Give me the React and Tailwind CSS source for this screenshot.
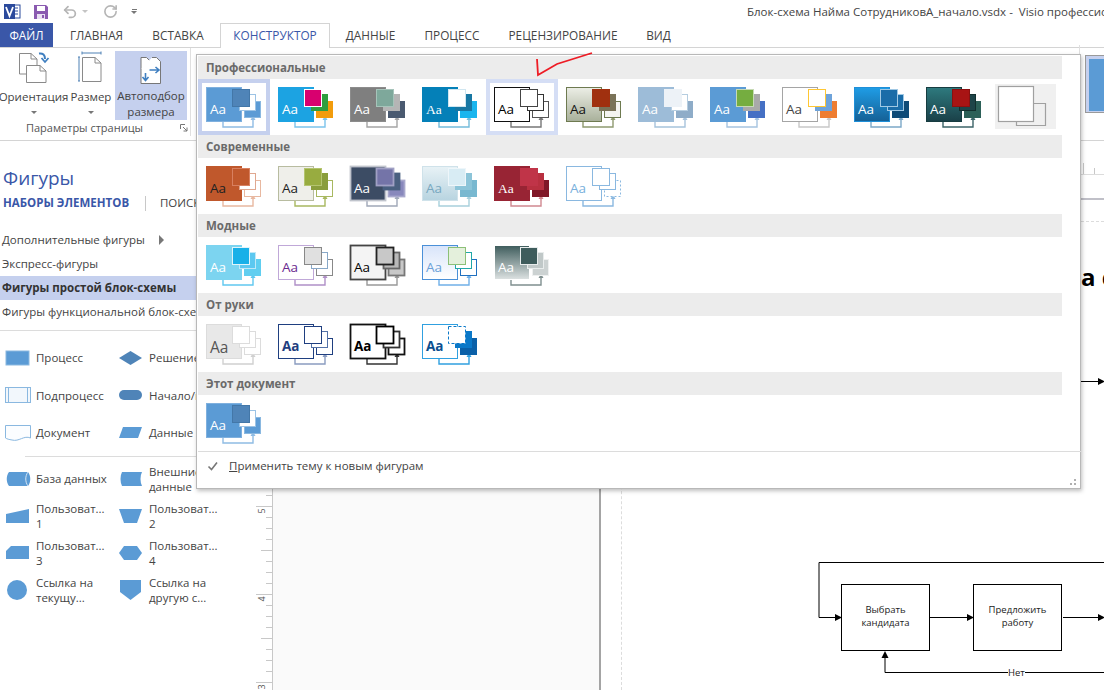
import { RotateCcw, Undo2 } from "lucide-react";

const tabs = [
  { label: "ГЛАВНАЯ", w: "w-[83px]" },
  { label: "ВСТАВКА", w: "w-[80px]" },
  { label: "ДАННЫЕ", w: "w-[81px]" },
  { label: "ПРОЦЕСС", w: "w-[82px]" },
  { label: "РЕЦЕНЗИРОВАНИЕ", w: "w-[140px]" },
  { label: "ВИД", w: "w-[51px]" },
];

// big, back, mid, front: [fill, stroke]; line: connector colour; aa: text colour
const professional = [
  { id: "p1", big: ["#5b9bd5", "#7fb0de"], front: ["#4f84b8", "#4377a8"], mid: ["#fff", "#9cc3e5"], back: ["#5b9bd5", "#8ab8e0"], line: "#8fbce4", aa: "#fff", sel: "#c5d0ee" },
  { id: "p2", big: ["#1ca3e2", "#1ca3e2"], front: ["#d8006f", "#fff"], mid: ["#2e9e3f", "#2e9e3f"], back: ["#f29c0c", "#f29c0c"], line: "#7cc4ec", aa: "#fff" },
  { id: "p3", big: ["#7f7f7f", "#8c8c8c"], front: ["#7ea89b", "#a6c4ba"], mid: ["#b5b5b5", "#b5b5b5"], back: ["#4a5a70", "#4a5a70"], line: "#a5a5a5", aa: "#fff" },
  { id: "p4", big: ["#0480b8", "#0480b8"], front: ["#fff", "#d0e6f0"], mid: ["#1877a3", "#1877a3"], back: ["#19b5ee", "#19b5ee"], line: "#74bcdb", aa: "#fff", serif: true },
  { id: "p5", big: ["#fff", "#111"], front: ["#fff", "#444"], mid: ["#fff", "#333"], back: ["#fff", "#555"], line: "#777", aa: "#000", sel: "#d5def5" },
  { id: "p6", big: ["url(#p6g)", "#6e7a50"], grad: ["#eceee6", "#a8b09a"], front: ["#a0300f", "#a0300f"], mid: ["#7a7358", "#7a7358"], back: ["#f4f4f0", "#6e7a50"], line: "#8f9a70", aa: "#111" },
  { id: "p7", big: ["#9dbcd8", "#9dbcd8"], front: ["#edf2f7", "#edf2f7"], mid: ["#fff", "#b5cde0"], back: ["#8eacc8", "#8eacc8"], line: "#a7c3dc", aa: "#fff" },
  { id: "p8", big: ["#5b9bd5", "#5b9bd5"], front: ["#75ad40", "#c6dab4"], mid: ["#a9a9a9", "#a9a9a9"], back: ["#4570c4", "#4570c4"], line: "#a6c4e0", aa: "#fff" },
  { id: "p9", big: ["#fff", "#a5a5a5"], front: ["#fff", "#ffc733"], mid: ["#6ea3da", "#6ea3da"], back: ["#ee7d31", "#ee7d31"], line: "#c8c8c8", aa: "#444" },
  { id: "p10", big: ["url(#p10g)", "#1f8fd8"], grad: ["#1f9de6", "#156095"], front: ["#1a6ca8", "#a0c8e4"], mid: ["#1a6ca8", "#a0c8e4"], back: ["#0e4b78", "#0e4b78"], line: "#7ca8c8", aa: "#fff" },
  { id: "p11", big: ["url(#p11g)", "#173c40"], grad: ["#2e7a7e", "#1a4048"], front: ["#a81414", "#8a1010"], mid: ["#1e4448", "#12302f"], back: ["#2c6058", "#2c6058"], line: "#3c6468", aa: "#fff" },
  { id: "p12", big: ["#fff", "#a0a0a0"], plain: true, line: "#a0a0a0" },
];

const modern = [
  { id: "m1", big: ["#c0582c", "#c0582c"], front: ["#c0582c", "#d88060"], mid: ["#fff", "#e0a890"], back: ["#fff", "#e8b8a0"], line: "#e8b8a0", aa: "#222" },
  { id: "m2", big: ["#efefea", "#b8bca0"], front: ["#98ac40", "#b4c470"], mid: ["#8a9e3c", "#8a9e3c"], back: ["#fff", "#a8b860"], line: "#a8b860", aa: "#222" },
  { id: "m3", big: ["#3c4c64", "#c0c4cc"], front: ["#7474a8", "#a0a0c4"], mid: ["#4a6080", "#4a6080"], back: ["#8888bc", "#a8a8cc"], line: "#a0a8b8", aa: "#fff", heavy: true },
  { id: "m4", big: ["url(#m4g)", "#cfe2ea"], grad: ["#e8f2f6", "#b8d4e0"], front: ["#d8ecf4", "#eef6fa"], mid: ["#8cc4d8", "#8cc4d8"], back: ["#78b8d0", "#78b8d0"], line: "#a8d0dc", aa: "#78a8c0" },
  { id: "m5", big: ["#982434", "#982434"], front: ["#c03448", "#c03448"], mid: ["#b83040", "#b83040"], back: ["#801828", "#801828"], line: "#d08890", aa: "#fff", serif: true },
  { id: "m6", big: ["#fff", "#8ab8e0"], front: ["#fff", "#8ab8e0"], mid: ["#fff", "#8ab8e0"], back: ["#fff", "#8ab8e0"], dashBack: true, line: "#8ab8e0", aa: "#78b0dc" },
];

const trendy = [
  { id: "t1", big: ["#7cd4f0", "#7cd4f0"], front: ["#18b0e8", "#dff4fb"], mid: ["#5cc8f0", "#bfe8f8"], back: ["#60cef0", "#60cef0"], line: "#60c8f0", aa: "#fff" },
  { id: "t2", big: ["#fff", "#c0a8d8"], front: ["#e0e0e0", "#888"], mid: ["#fff", "#88a8c8"], back: ["#fff", "#888"], line: "#b090c8", aa: "#6a2a90" },
  { id: "t3", big: ["#f4f4f4", "#444"], front: ["#c8c8c8", "#222"], mid: ["#b8b8b8", "#666"], back: ["#c8c8c8", "#777"], line: "#999", aa: "#000", heavy: true },
  { id: "t4", big: ["url(#t4g)", "#4a90d8"], grad: ["#d8e4fa", "#fff"], front: ["#e4f0dc", "#8cc078"], mid: ["#fff", "#20a8a8"], back: ["#fff", "#2070c0"], line: "#70b0e8", aa: "#6aa0d8" },
  { id: "t5", big: ["url(#t5g)", "#fff"], grad: ["#3e5c5c", "#dde2e2"], front: ["#3e5c5c", "#e8ecec"], mid: ["#c0c8c8", "#e8ecec"], back: ["#ccd2d2", "#eef0f0"], line: "#7f8f8f", aa: "#fff" },
];

const sketch = [
  { id: "s1", big: ["#e8e8e8", "#dcdcdc"], front: ["#fff", "#dcdcdc"], mid: ["#fff", "#dcdcdc"], back: ["#fff", "#dcdcdc"], line: "#d0d0d0", aa: "#555", large: true },
  { id: "s2", big: ["#fff", "#1f3f80"], front: ["#fff", "#1f3f80"], mid: ["#fff", "#5472a8"], back: ["#fff", "#1f3f80"], line: "#8a9cc0", aa: "#1f3f80", bold: true },
  { id: "s3", big: ["#fff", "#111"], front: ["#fff", "#000"], mid: ["#fff", "#333"], back: ["#fff", "#111"], line: "#333", aa: "#000", bold: true, heavy: true },
  { id: "s4", big: ["#fff", "#30a0e0"], front: ["#fff", "#0a78c8"], mid: ["#0a78c8", "#0a78c8"], back: ["#0a60a8", "#0a60a8"], dashFront: true, line: "#30a0e0", aa: "#0a5090", bold: true },
];

const shapesTop = [
  [{ name: "Процесс", kind: "process" }, { name: "Решение", kind: "decision" }],
  [{ name: "Подпроцесс", kind: "subprocess" }, { name: "Начало/конец", kind: "terminator", nowrap: true }],
  [{ name: "Документ", kind: "document" }, { name: "Данные", kind: "data" }],
];

const shapesBottom = [
  [{ name: "База данных", kind: "database" }, { name: "Внешние данные", kind: "external" }],
  [{ name: "Пользоват... 1", kind: "manual" }, { name: "Пользоват... 2", kind: "trapezoid" }],
  [{ name: "Пользоват... 3", kind: "cut" }, { name: "Пользоват... 4", kind: "hexagon" }],
  [{ name: "Ссылка на текущу...", kind: "circle" }, { name: "Ссылка на другую с...", kind: "offpage" }],
];

function ShapeIcon({ kind }) {
  const fill = "#5b9bd5";
  const dark = "#4f84b8";
  return (
    <svg width="28" height="22" viewBox="0 0 28 22" className="shrink-0">
      {kind === "process" && <rect x="2" y="4" width="23" height="14" fill={fill} stroke="#8ab8e0" />}
      {kind === "decision" && <polygon points="2,11 13.5,4 25,11 13.5,18" fill={dark} />}
      {kind === "subprocess" && (
        <g fill="#f2f7fc" stroke="#8ab8e0">
          <rect x="1.5" y="3.5" width="25" height="15" />
          <line x1="4.5" y1="3.5" x2="4.5" y2="18.5" />
          <line x1="23.5" y1="3.5" x2="23.5" y2="18.5" />
        </g>
      )}
      {kind === "terminator" && <rect x="2" y="6" width="23" height="10" rx="5" fill={dark} />}
      {kind === "document" && <path d="M1.5 3.5H26.5V16C20 13 15 20 8 18C5 17.5 3 17 1.5 16Z" fill="#fbfdff" stroke="#8ab8e0" />}
      {kind === "data" && <polygon points="6,5 25,5 21,16 2,16" fill={fill} />}
      {kind === "database" && (
        <g>
          <path d="M5 4H24C27 8 27 14 24 18H5C2 14 2 8 5 4Z" fill={fill} />
          <path d="M24 4C21 8 21 14 24 18" fill="none" stroke="#d6e6f5" />
        </g>
      )}
      {kind === "external" && <path d="M5 4H25C23 8 23 14 25 18H5C3 14 3 8 5 4Z" fill={fill} />}
      {kind === "manual" && <polygon points="2,9 25,4 25,18 2,18" fill={fill} />}
      {kind === "trapezoid" && <polygon points="2,4 25,4 20,18 7,18" fill={fill} />}
      {kind === "cut" && <polygon points="7,4 25,4 25,17 2,17 2,9" fill={fill} />}
      {kind === "hexagon" && <polygon points="2,11 7,4 20,4 25,11 20,18 7,18" fill={fill} />}
      {kind === "circle" && <circle cx="13" cy="11" r="10" fill={fill} />}
      {kind === "offpage" && <polygon points="3,1 24,1 24,13 13.5,21 3,13" fill={fill} />}
    </svg>
  );
}

function ThemeThumb({ t }) {
  const sw = t.heavy ? 1.8 : 1;
  const font = t.serif ? "Liberation Serif, serif" : "Open Sans, sans-serif";
  return (
    <svg width="72" height="56" viewBox="0 0 72 56" className="shrink-0">
      {t.grad && (
        <defs>
          <linearGradient id={`${t.id}g`} x1="0" y1="0" x2="0" y2="1">
            <stop offset="0" stopColor={t.grad[0]} />
            <stop offset="1" stopColor={t.grad[1]} />
          </linearGradient>
        </defs>
      )}
      {t.sel && <rect x="2" y="2" width="68" height="52" fill="#fff" stroke={t.sel} strokeWidth="4" />}
      {t.plain ? (
        <g>
          <rect x="5" y="5" width="61" height="45" fill="#f0f0f0" />
          <polyline points="44,24.5 55.5,24.5 55.5,46.5 26.5,46.5 26.5,43" fill="none" stroke={t.line} strokeWidth="1.2" />
          <rect x="8.5" y="7.5" width="35" height="35" fill="#fff" stroke={t.big[1]} strokeWidth="1.2" />
        </g>
      ) : (
        <g>
          <polyline points="25,42 25,48 55,48 55,40" fill="none" stroke={t.line} strokeWidth="1.4" />
          <polygon points="52.5,41 57.5,41 55,36.5" fill={t.line} />
          <rect x="8.5" y="8.5" width="35" height="34" fill={t.big[0]} stroke={t.big[1]} strokeWidth={sw} />
          <rect x="46.5" y="22.5" width="16" height="16" fill={t.back[0]} stroke={t.back[1]} strokeWidth={sw} strokeDasharray={t.dashBack ? "2 2" : undefined} />
          <rect x="41.5" y="15.5" width="16" height="16" fill={t.mid[0]} stroke={t.mid[1]} strokeWidth={sw} />
          <rect x="34.5" y="10.5" width="17" height="17" fill={t.front[0]} stroke={t.front[1]} strokeWidth={sw} strokeDasharray={t.dashFront ? "3 2" : undefined} />
          <text x="12" y={t.large ? 37 : 35} fontSize={t.large ? 15.5 : 13.5} fontWeight={t.bold ? 700 : 400} fontFamily={font} fill={t.aa}>
            Aa
          </text>
        </g>
      )}
    </svg>
  );
}

function GallerySection({ title, items }) {
  return (
    <div>
      <div className="w-[864px] h-[23px] bg-[#ececec] pl-[8px] flex items-center text-[11.5px] font-bold text-[#6a6a6a]">{title}</div>
      <div className="flex h-[56px]">
        {items.map((t) => (
          <ThemeThumb key={t.id} t={t} />
        ))}
      </div>
    </div>
  );
}

function ThemeDropdown() {
  return (
    <div className="absolute left-[196px] top-[54px] w-[885px] h-[435px] bg-white border border-[#b8b8b8] p-px shadow-[1px_2px_4px_rgba(0,0,0,0.25)]">
      <GallerySection title="Профессиональные" items={professional} />
      <GallerySection title="Современные" items={modern} />
      <GallerySection title="Модные" items={trendy} />
      <GallerySection title="От руки" items={sketch} />
      <GallerySection title="Этот документ" items={[{ ...professional[0], id: "d1", sel: undefined }]} />
      <div className="border-t border-[#dcdcdc] h-[28px] flex items-center w-[883px]">
        <svg width="12" height="12" viewBox="0 0 12 12" className="ml-[9px] mr-[10px]">
          <path d="M1.5 6.5L4.5 9.5L10 2.5" fill="none" stroke="#777" strokeWidth="1.6" />
        </svg>
        <span className="text-[11.5px] text-[#444]">
          <span className="underline">П</span>рименить тему к новым фигурам
        </span>
      </div>
      <div className="absolute right-[4px] bottom-[3px] grid grid-cols-2 gap-[2px]">
        <span className="w-[2px] h-[2px]" />
        <span className="w-[2px] h-[2px] bg-[#b0b0b0]" />
        <span className="w-[2px] h-[2px] bg-[#b0b0b0]" />
        <span className="w-[2px] h-[2px] bg-[#b0b0b0]" />
      </div>
    </div>
  );
}

function TitleBar() {
  return (
    <div className="h-[23px] flex items-center relative shrink-0">
      <svg width="18" height="18" viewBox="0 0 18 18" className="ml-[3px]">
        <rect x="9" y="2" width="8" height="13" fill="#fff" stroke="#2b4a9c" />
        <path d="M11 5H15M11 8H15M11 11H15" stroke="#2b4a9c" />
        <rect x="1" y="1" width="11" height="15" fill="#2b4a9c" />
        <path d="M3 4L6.5 13L10 4" fill="none" stroke="#fff" strokeWidth="1.8" />
      </svg>
      <svg width="16" height="16" viewBox="0 0 16 16" className="ml-[12px]">
        <path d="M1 1H13L15 3V15H1Z" fill="#8a5ab0" />
        <rect x="4" y="2" width="8" height="5" fill="#fff" />
        <rect x="4" y="10" width="8" height="5" fill="#e9dff2" />
        <rect x="9" y="11" width="2" height="3" fill="#8a5ab0" />
      </svg>
      <Undo2 size={16} strokeWidth={2.6} className="text-[#b5b5b5] ml-[13px]" />
      <span className="w-0 h-0 ml-[4px] border-x-[3px] border-x-transparent border-t-[3px] border-t-[#c4c4c4]" />
      <RotateCcw size={15} strokeWidth={2.6} className="text-[#b5b5b5] ml-[15px] -scale-x-100" />
      <span className="ml-[13px] flex flex-col items-center gap-[1px]">
        <span className="w-[5px] h-px bg-[#777]" />
        <span className="w-0 h-0 border-x-[3px] border-x-transparent border-t-[3px] border-t-[#777]" />
      </span>
      <span className="absolute left-[747px] top-[3px] text-[11.5px] text-[#444] whitespace-pre">
        Блок-схема Найма СотрудниковА_начало.vsdx -  Visio профессиональный
      </span>
    </div>
  );
}

function Tab({ tab }) {
  return <div className={`${tab.w} text-center text-[11.8px] text-[#444] leading-[24px]`}>{tab.label}</div>;
}

function TabRow() {
  return (
    <div className="h-[25px] flex border-b border-[#d4d4d4] shrink-0">
      <div className="w-[53px] h-[24px] bg-[#3a57a8] text-white text-[11.8px] leading-[24px] text-center">ФАЙЛ</div>
      <div className="w-[2px]" />
      <Tab tab={tabs[0]} />
      <Tab tab={tabs[1]} />
      <div className="w-[2px]" />
      <div className="w-[110px] h-[25px] bg-white border border-b-0 border-[#d4d4d4] text-center text-[11.8px] text-[#3a57a8] leading-[23px]">
        КОНСТРУКТОР
      </div>
      <Tab tab={tabs[2]} />
      <Tab tab={tabs[3]} />
      <Tab tab={tabs[4]} />
      <Tab tab={tabs[5]} />
    </div>
  );
}

function Caret() {
  return <span className="w-0 h-0 border-x-[3px] border-x-transparent border-t-[3px] border-t-[#777] mt-[6px]" />;
}

function Ribbon() {
  return (
    <div className="h-[93px] flex border-b border-[#d4d4d4] shrink-0 relative">
      <div className="w-[191px] border-r border-[#e0e0e0] flex flex-col shrink-0 h-[88px]">
        <div className="flex pt-[3px] h-[76px]">
          <div className="w-[67px] flex flex-col items-center text-[11.5px] text-[#444]">
            <svg width="34" height="32" viewBox="0 0 34 32" className="ml-[3px]">
              <path d="M1.5 2.5H13L19 8V23H1.5Z" fill="#fff" stroke="#8a8a8a" />
              <path d="M13 2.5V8H19" fill="none" stroke="#8a8a8a" />
              <path d="M8.5 14.5H22L28 20V31.5H8.5Z" fill="#fff" stroke="#8a8a8a" />
              <path d="M22 14.5V20H28" fill="none" stroke="#8a8a8a" />
              <path d="M21 2.5C25 2 27 4 27 8" fill="none" stroke="#3f7fc0" strokeWidth="2" />
              <path d="M23.5 7L27 11L30.5 7" fill="none" stroke="#3f7fc0" strokeWidth="1.8" />
            </svg>
            <span className="leading-[16px] mt-[6px]">Ориентация</span>
            <Caret />
          </div>
          <div className="w-[48px] flex flex-col items-center text-[11.5px] text-[#444]">
            <svg width="26" height="32" viewBox="0 0 26 32">
              <path d="M4 2H23M4 0.5V3.5M23 0.5V3.5" stroke="#4f81b5" fill="none" />
              <path d="M1 6V30M0 6H2M0 30H2" stroke="#4f81b5" fill="none" />
              <path d="M4.5 6.5H17L23 12V30.5H4.5Z" fill="#fff" stroke="#8a8a8a" />
              <path d="M17 6.5V12H23" fill="none" stroke="#8a8a8a" />
            </svg>
            <span className="leading-[16px] mt-[6px]">Размер</span>
            <Caret />
          </div>
          <div className="w-[72px] h-[69px] bg-[#c5d0ee] flex flex-col items-center text-[11.5px] text-[#444] leading-[16px]">
            <svg width="22" height="27" viewBox="3 3 21 27" className="mt-[6px]">
              <path d="M3.5 3.5H9L12 6.5V15H3.5Z" fill="#fff" stroke="#777" />
              <path d="M14.5 3.5H19L23 7.5V29.5H3.5V15" fill="#fff" stroke="#777" />
              <path d="M12 16H21M18 13L21.5 16L18 19" fill="none" stroke="#3f7fc0" strokeWidth="1.6" />
              <path d="M8 19V26M5 23L8 26.5L11 23" fill="none" stroke="#3f7fc0" strokeWidth="1.6" />
            </svg>
            <span className="mt-[4px] whitespace-nowrap">Автоподбор</span>
            <span>размера</span>
          </div>
        </div>
        <div className="flex items-center relative">
          <span className="w-[169px] text-center text-[11px] text-[#555]">Параметры страницы</span>
          <svg width="8" height="8" viewBox="0 0 8 8" className="absolute left-[180px]">
            <path d="M0.5 0.5H5M0.5 0.5V5M3 3L7 7M7 3.5V7H3.5" fill="none" stroke="#777" />
          </svg>
        </div>
      </div>
      <div className="ml-auto mr-0 w-[19px] border-l border-[#e0e0e0] h-[88px] mt-[-3px] pl-[5px] pt-[10px] box-content">
        <div className="w-[20px] h-[58px] bg-[#c5d0ee] border border-[#9a9a9a] pl-[3px] pt-[3px]">
          <div className="w-[20px] h-[52px] bg-[#5b9bd5]" />
        </div>
      </div>
    </div>
  );
}

function ShapeRow({ row, h }) {
  return (
    <div className={`flex ${h} items-center`}>
      {row.map((s) => (
        <div key={s.name} className="w-[113px] flex items-center shrink-0">
          <span className="ml-[4px] mr-[4px] flex"><ShapeIcon kind={s.kind} /></span>
          <span className={`w-[72px] text-[11.5px] leading-[15.5px] text-[#444] ${s.nowrap ? "whitespace-nowrap" : ""}`}>{s.name}</span>
        </div>
      ))}
    </div>
  );
}

function ShapesPanel() {
  return (
    <div className="w-[256px] shrink-0 overflow-hidden">
      <div className="pt-[23px] pl-[3px] h-[51px] text-[19px] leading-[28px] text-[#3a57a8]">Фигуры</div>
      <div className="flex items-center h-[22px] pl-[3px] text-[11.5px]">
        <span className="w-[128px] font-bold text-[#3a57a8] whitespace-nowrap">НАБОРЫ ЭЛЕМЕНТОВ</span>
        <span className="w-px h-[15px] bg-[#c8c8c8] mx-[14px]" />
        <span className="text-[#444]">ПОИСК</span>
      </div>
      <div className="mt-[14px] text-[11.5px] text-[#444]">
        <div className="h-[24px] flex items-center pl-[2px] w-[196px] whitespace-nowrap">
          Дополнительные фигуры
          <span className="ml-[14px] w-0 h-0 border-y-[5px] border-y-transparent border-l-[5px] border-l-[#777]" />
        </div>
        <div className="h-[24px] flex items-center pl-[2px]">Экспресс-фигуры</div>
        <div className="h-[24px] flex items-center pl-[2px] w-[196px] bg-[#c5d0ee] font-bold text-[#333] whitespace-nowrap">Фигуры простой блок-схемы</div>
        <div className="h-[24px] flex items-center pl-[2px] whitespace-nowrap">Фигуры функциональной блок-схемы</div>
      </div>
      <div className="mt-[6px] border-t border-[#dcdcdc] pt-[8px] w-[256px]">
        {shapesTop.map((row) => (
          <ShapeRow key={row[0].name} row={row} h="h-[37.5px]" />
        ))}
        <div className="h-px bg-[#dcdcdc] ml-[25px] mt-[4px] mb-[4px]" />
        {shapesBottom.map((row) => (
          <ShapeRow key={row[0].name} row={row} h="h-[37px]" />
        ))}
      </div>
    </div>
  );
}

function VerticalRuler() {
  const ticks = Array.from({ length: 45 }, (_, i) => i);
  const labels = [
    { n: "5", y: 311 },
    { n: "4", y: 399 },
    { n: "3", y: 487 },
  ];
  return (
    <svg width="17" height="490" viewBox="0 0 17 490" className="shrink-0 mt-[59px]">
      <rect width="17" height="490" fill="#fff" />
      {ticks.map((i) => {
        const y = 9.5 + i * 11;
        const k = i % 8;
        const x = k === 3 ? 0 : k === 7 ? 5 : 10;
        return <line key={i} x1={x} x2="16" y1={y} y2={y} stroke="#c8c8c8" />;
      })}
      <line x1="16.5" x2="16.5" y1="0" y2="490" stroke="#c8c8c8" />
      {labels.map((l) => (
        <text key={l.n} x="6" y={l.y + 3} textAnchor="middle" fontSize="9" fill="#555" fontFamily="Open Sans, sans-serif" transform={`rotate(-90 6 ${l.y})`}>
          {l.n}
        </text>
      ))}
    </svg>
  );
}

function TopRuler() {
  const ticks = Array.from({ length: 76 }, (_, i) => i);
  return (
    <div className="h-[59px] border-b-2 border-[#c0c0c8] shrink-0">
      <svg width="831" height="34" viewBox="0 0 831 34">
        <line x1="0" x2="831" y1="33.5" y2="33.5" stroke="#dcdcdc" />
        {ticks.map((i) => {
          const x = 7.5 + i * 11;
          return <line key={i} x1={x} x2={x} y1={i % 2 === 1 ? 22 : 27} y2="33" stroke="#c8c8c8" />;
        })}
      </svg>
    </div>
  );
}

function DiagramBox({ left, children }) {
  return (
    <div
      className={`absolute top-[384px] w-[89px] h-[67px] pb-[3px] border border-black bg-white flex items-center justify-center text-center text-[9.5px] leading-[13px] text-[#222] ${left}`}
    >
      <span>{children}</span>
    </div>
  );
}

function Canvas() {
  return (
    <div className="relative flex-1 bg-white border-l-2 border-[#a4a4a4] overflow-hidden">
      <div className="absolute left-[20px] top-0 bottom-0 border-l border-dashed border-[#dcdcdc]" />
      <div className="absolute left-[20px] right-0 top-[21px] border-t border-dashed border-[#dcdcdc]" />
      <span className="absolute left-[480px] top-[60px] text-[24px] font-bold text-black whitespace-nowrap leading-[34px]">а с</span>
      <svg width="504" height="490" viewBox="0 0 504 490" className="absolute left-0 top-0">
        <g fill="none" stroke="#000">
          <path d="M480 181.5H504" />
          <path d="M504 362.5H218V417.5H238" />
          <path d="M329 417.5H371" />
          <path d="M462 417.5H504" />
          <path d="M504 472.5H284V455" />
        </g>
        <g fill="#000">
          <polygon points="497,178 504,181.5 497,185" />
          <polygon points="234,414 241,417.5 234,421" />
          <polygon points="366,414 373,417.5 366,421" />
          <polygon points="497,414 504,417.5 497,421" />
          <polygon points="280.5,458 284,451 287.5,458" />
        </g>
      </svg>
      <DiagramBox left="left-[240px]">
        Выбрать
        <br />
        кандидата
      </DiagramBox>
      <DiagramBox left="left-[372px]">
        Предложить
        <br />
        работу
      </DiagramBox>
      <span className="absolute left-[407px] top-[466px] bg-white text-[9.5px] leading-[13px] text-[#222]">Нет</span>
    </div>
  );
}

export default function App() {
  return (
    <div className="relative w-[1104px] h-[690px] overflow-hidden bg-white flex flex-col font-['Open_Sans',sans-serif]">
      <TitleBar />
      <TabRow />
      <Ribbon />
      <div className="flex flex-1 min-h-0">
        <ShapesPanel />
        <VerticalRuler />
        <div className="flex-1 flex flex-col min-w-0">
          <TopRuler />
          <div className="flex flex-1 min-h-0">
            <div className="w-[326px] bg-[#fafafa] shrink-0" />
            <Canvas />
          </div>
        </div>
      </div>
      <ThemeDropdown />
      <svg width="60" height="26" viewBox="0 0 60 26" className="absolute left-[535px] top-[52px]">
        <path d="M2 7L3 23L22 12L57 1" fill="none" stroke="#ee1c25" strokeWidth="1.8" />
      </svg>
    </div>
  );
}
